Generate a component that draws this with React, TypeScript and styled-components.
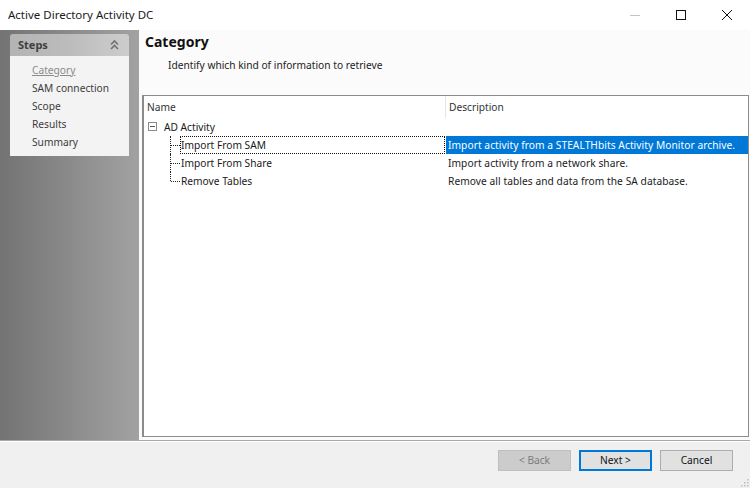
import React from "react";
import styled, { createGlobalStyle } from "styled-components";

const Global = createGlobalStyle`
  html, body { margin: 0; padding: 0; }
  body { width: 750px; height: 488px; overflow: hidden; background: #f0f0f0; font-family: "Noto Sans", Tahoma, sans-serif; }
`;
const Window = styled.div`
  width: 750px; height: 488px; display: flex; flex-direction: column; color: #111;
  font-size: 10.2px; line-height: 18px;
`;
const TitleBar = styled.header`
  height: 30px; flex: none; background: #fff; display: flex; align-items: center; padding-left: 8px;
`;
const TitleText = styled.div`
  flex: 1; font-size: 11.5px; color: #1a1a1a;
`;
const WinButtons = styled.div`
  display: flex; height: 30px;
`;
const WinButton = styled.div`
  width: 46px; height: 30px; display: flex; align-items: center; justify-content: center;
`;
const Body = styled.div`
  flex: 1; display: flex; min-height: 0;
`;
const Sidebar = styled.aside`
  width: 139px; flex: none; background: linear-gradient(90deg, #737373 0%, #a2a2a2 100%);
  padding: 4px 10px 0 10px; box-sizing: border-box;
`;
const StepsHead = styled.div`
  height: 22px; border-radius: 3px 3px 0 0; background: linear-gradient(90deg, #b4b4b4, #bcbcbc 50%, #cdcdcd);
  display: flex; align-items: center; justify-content: space-between; padding: 0 10px 0 8px;
  font-weight: 700; font-size: 11px; color: #3f3f3f;
`;
const StepsList = styled.div`
  background: #f3f3f3; padding: 5px 0 5px 22px; height: 100px; box-sizing: border-box;
`;
const Step = styled.div<{ $active?: boolean }>`
  height: 18px; line-height: 18px; color: ${p => (p.$active ? "#8a8a8a" : "#3c3c3c")};
  text-decoration: ${p => (p.$active ? "underline" : "none")};
`;
const Main = styled.main`
  flex: 1; display: flex; flex-direction: column; min-width: 0; padding: 0 1px 3px 3px; background: #fbfbfb;
`;
const Heading = styled.h1`
  margin: 0; padding-left: 3px; font-size: 14px; line-height: 18px; font-weight: 700; color: #111; height: 25px;
  padding-top: 3px; box-sizing: border-box;
`;
const Sub = styled.p`
  margin: 0; padding-left: 26px; height: 40px; line-height: 18px; color: #222; box-sizing: border-box; padding-top: 1px;
`;
const Grid = styled.div`
  flex: 1; background: #fff; border: 1px solid #8c8c8c; border-left-width: 2px;
  box-sizing: border-box; min-height: 0;
`;
const HeaderRow = styled.div`
  display: flex; height: 22px;
`;
const HeaderCell = styled.div<{ $w: number }>`
  width: ${p => p.$w}px; flex: none; padding-left: 3px; line-height: 23px; box-sizing: border-box;
  color: #333; border-right: 1px solid #e5e5e5;
  &:last-child { border-right: 0; }
`;
const Row = styled.div`
  display: flex; height: 18px; line-height: 18px;
`;
const NameCell = styled.div`
  width: 301px; flex: none; display: flex; align-items: stretch; white-space: nowrap; box-sizing: border-box;
`;
const DescCell = styled.div<{ $sel?: boolean }>`
  flex: 1; padding-left: 2px; white-space: nowrap; margin-left: 1px; letter-spacing: 0.06px;
  background: ${p => (p.$sel ? "#0078d7" : "transparent")}; color: ${p => (p.$sel ? "#fff" : "#1a1a1a")};
`;
const Expander = styled.div`
  width: 9px; height: 9px; border: 1px solid #8a8a8a; margin: 4px 7px 0 4px; position: relative; box-sizing: border-box;
  &::after { content: ""; position: absolute; left: 1px; right: 1px; top: 3px; height: 1px; background: #555; }
`;
const Connector = styled.div<{ $last?: boolean }>`
  width: 10px; margin-left: 26px; flex: none; position: relative;
  &::before { content: ""; position: absolute; left: 0; top: 0; height: ${p => (p.$last ? "9px" : "18px")}; border-left: 1px dotted #222; }
  &::after { content: ""; position: absolute; left: 1px; right: 0; top: 9px; border-top: 1px dotted #222; }
`;
const NodeLabel = styled.div<{ $focus?: boolean }>`
  flex: 1; padding-left: 1px; box-sizing: border-box; color: #1a1a1a;
  ${p => (p.$focus ? "outline: 1px dotted #111; outline-offset: -1px;" : "")}
`;
const RootLabel = styled.div`
  color: #1a1a1a;
`;
const Footer = styled.footer`
  height: 48px; flex: none; border-top: 1px solid #a8a8a8; box-shadow: inset 0 1px 0 #fff; background: #f0f0f0; box-sizing: border-box;
  display: flex; justify-content: flex-end; align-items: flex-start; gap: 8px; padding: 9px 17px 0 0; position: relative;
`;
const Btn = styled.div<{ $kind?: "disabled" | "primary" }>`
  width: 73px; height: 21px; box-sizing: border-box; text-align: center;
  background: ${p => (p.$kind === "disabled" ? "#cccccc" : "#e1e1e1")};
  color: ${p => (p.$kind === "disabled" ? "#7c7c7c" : "#111")};
  border: ${p => (p.$kind === "primary" ? "2px solid #0078d7" : "1px solid #adadad")};
  line-height: ${p => (p.$kind === "primary" ? "17px" : "19px")};
  ${p => (p.$kind === "disabled" ? "border-color: #bfbfbf;" : "")}
`;
const Grip = styled.svg`
  position: absolute; right: 1px; bottom: 1px;
`;

export default function App() {
  return (
    <Window>
      <Global />
      <TitleBar>
        <TitleText>Active Directory Activity DC</TitleText>
        <WinButtons>
          <WinButton>
            <svg width="12" height="12" viewBox="0 0 12 12"><path d="M1 6.5h10" stroke="#c4c4c4" strokeWidth="1" /></svg>
          </WinButton>
          <WinButton>
            <svg width="12" height="12" viewBox="0 0 12 12"><rect x="1.5" y="1.5" width="9" height="9" fill="none" stroke="#111" strokeWidth="1" /></svg>
          </WinButton>
          <WinButton>
            <svg width="12" height="12" viewBox="0 0 12 12"><path d="M1 1l10 10M11 1L1 11" stroke="#111" strokeWidth="1" /></svg>
          </WinButton>
        </WinButtons>
      </TitleBar>
      <Body>
        <Sidebar>
          <StepsHead>
            Steps
            <svg width="9" height="12" viewBox="0 0 9 12">
              <path d="M1 5.5l3.5-3.5L8 5.5M1 10l3.5-3.5L8 10" fill="none" stroke="#737373" strokeWidth="1.6" />
            </svg>
          </StepsHead>
          <StepsList>
            <Step $active>Category</Step>
            <Step>SAM connection</Step>
            <Step>Scope</Step>
            <Step>Results</Step>
            <Step>Summary</Step>
          </StepsList>
        </Sidebar>
        <Main>
          <Heading>Category</Heading>
          <Sub>Identify which kind of information to retrieve</Sub>
          <Grid>
            <HeaderRow>
              <HeaderCell $w={302}>Name</HeaderCell>
              <HeaderCell $w={300}>Description</HeaderCell>
            </HeaderRow>
            <Row>
              <NameCell>
                <Expander />
                <RootLabel>AD Activity</RootLabel>
              </NameCell>
              <DescCell />
            </Row>
            <Row>
              <NameCell>
                <Connector />
                <NodeLabel $focus>Import From SAM</NodeLabel>
              </NameCell>
              <DescCell $sel>Import activity from a STEALTHbits Activity Monitor archive.</DescCell>
            </Row>
            <Row>
              <NameCell>
                <Connector />
                <NodeLabel>Import From Share</NodeLabel>
              </NameCell>
              <DescCell>Import activity from a network share.</DescCell>
            </Row>
            <Row>
              <NameCell>
                <Connector $last />
                <NodeLabel>Remove Tables</NodeLabel>
              </NameCell>
              <DescCell>Remove all tables and data from the SA database.</DescCell>
            </Row>
          </Grid>
        </Main>
      </Body>
      <Footer>
        <Btn $kind="disabled">&lt; Back</Btn>
        <Btn $kind="primary">Next &gt;</Btn>
        <Btn>Cancel</Btn>
        <Grip width="10" height="10" viewBox="0 0 10 10">
          <path d="M8 2h1.5v1.5H8zM5 5h1.5v1.5H5zM8 5h1.5v1.5H8zM2 8h1.5v1.5H2zM5 8h1.5v1.5H5zM8 8h1.5v1.5H8z" fill="#bdbdbd" />
        </Grip>
      </Footer>
    </Window>
  );
}
